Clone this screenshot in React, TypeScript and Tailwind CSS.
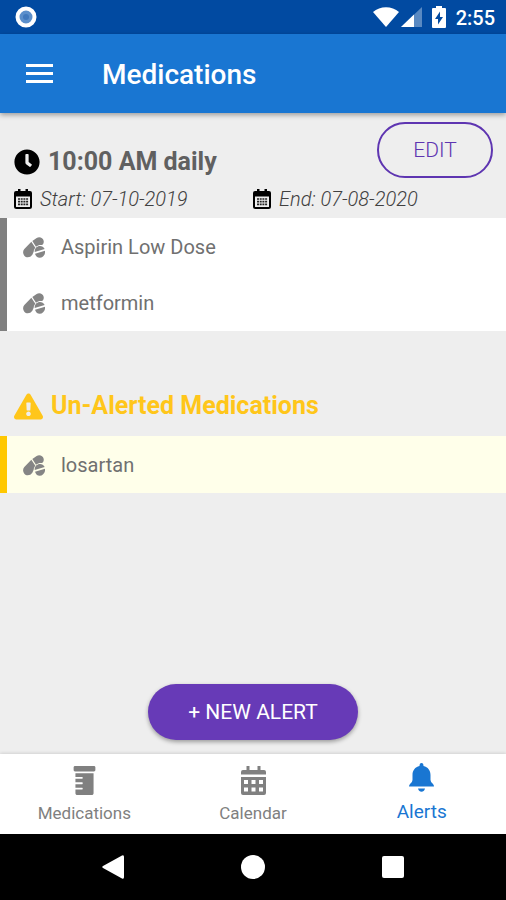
import type { ReactNode } from "react";
import { FaClock, FaExclamationTriangle, FaPrescriptionBottle } from "react-icons/fa";

function PillsIcon() {
  return (
    <svg viewBox="0 0 66 63" className="h-[21px] w-[22px] shrink-0 fill-[#858585]" aria-hidden="true">
      <path d="M28 12 L41 3 C49 -2 60 2 62 11 C63 17 61 21 57 24 C50 23 44 25 39 29 Z" />
      <path d="M25 14 L37 32 C34 36 32 40 32 44 L28 53 C22 62 10 63 4 56 C-1 50 -1 42 4 36 Z" />
      <path d="M35 45 C34 34 42 27 51 27 C57 27 62 30 65 36 Z" />
      <path d="M36 50 L66 41 C68 52 60 62 50 62 C43 62 38 57 36 50 Z" />
    </svg>
  );
}

function DateIcon() {
  return (
    <svg viewBox="0 0 18 20" className="h-5 w-[18px] shrink-0" aria-hidden="true">
      <path fill="#000" d="M4 0 H6.500 V2 H11.500 V0 H14 V2 H16 Q18 2 18 4 V7.500 H0 V4 Q0 2 2 2 H4 Z" />
      <rect x="1" y="5" width="16" height="14" rx="1.500" fill="none" stroke="#000" strokeWidth="2" />
      <path
        stroke="#222"
        strokeWidth="1.700"
        strokeDasharray="2 0.700"
        d="M4 10 H14.200 M4 12.700 H14.200 M4 15.400 H14.200"
      />
    </svg>
  );
}

function CalendarIcon() {
  return (
    <svg viewBox="0 0 25 29" className="h-[29px] w-[25px] fill-current" aria-hidden="true">
      <path d="M5.500 0 H8.500 V4 H16.500 V0 H19.500 V4 H23 Q25 4 25 6 V8.500 H0 V6 Q0 4 2 4 H5.500 Z" />
      <path
        fillRule="evenodd"
        d="M0 11 H25 V27 Q25 29 23 29 H2 Q0 29 0 27 Z M3 14 V18 H7 V14 Z M10.500 14 V18 H14.500 V14 Z M18 14 V18 H22 V14 Z M3 21.500 V25.500 H7 V21.500 Z M10.500 21.500 V25.500 H14.500 V21.500 Z M18 21.500 V25.500 H22 V21.500 Z"
      />
    </svg>
  );
}

function BellIcon() {
  return (
    <svg viewBox="0 0 25 29" className="h-[29px] w-[25px] fill-current" aria-hidden="true">
      <path d="M12.500 0 Q14.500 0 14.500 3 C19 4 21.500 7.500 21.500 12 V17 Q21.500 19 24 21 Q25 22 25 23.500 H0 Q0 22 1 21 Q3.500 19 3.500 17 V12 C3.500 7.500 6 4 10.500 3 Q10.500 0 12.500 0 Z" />
      <path d="M9 25.500 H16 C15.500 27.800 14 28.800 12.500 28.800 C11 28.800 9.500 27.800 9 25.500 Z" />
    </svg>
  );
}

function StatusBar() {
  return (
    <div className="flex h-[34px] items-center justify-between bg-[#014aa1] pr-[11px] pl-[15px] text-white">
      <svg viewBox="0 0 22 22" className="size-[22px]" aria-hidden="true">
        <circle cx="11" cy="11" r="8.5" fill="#5b8fcb" stroke="#fff" strokeWidth="4" />
        <circle cx="11" cy="11" r="3" fill="#4079bd" />
      </svg>
      <div className="flex items-center">
        <svg viewBox="0 0 26 20" className="h-5 w-[26px] fill-white" aria-hidden="true">
          <path d="M0 5 C7 -1.500 19 -1.500 26 5 L13 20 Z" />
        </svg>
        <svg viewBox="0 0 21 20" className="ml-[2px] h-5 w-[21px] fill-white" aria-hidden="true">
          <path d="M21 0 V20 H0 Z" opacity=".35" />
          <path d="M13 7.600 V20 H0 Z" />
        </svg>
        <svg viewBox="0 0 14 22" className="ml-[10px] h-[22px] w-[14px]" aria-hidden="true">
          <path fill="#fff" d="M4 0 H10 V2 H13 Q14 2 14 3 V21 Q14 22 13 22 H1 Q0 22 0 21 V3 Q0 2 1 2 H4 Z" />
          <path fill="#014aa1" d="M8 5.500 L3 13 H6 V18.500 L11 11 H8 Z" />
        </svg>
        <span className="ml-[10px] pt-px text-[20px] leading-6 font-medium">2:55</span>
      </div>
    </div>
  );
}

function AppBar() {
  return (
    <header className="z-10 flex h-[79px] items-center bg-[#1976d2] pl-[26px] text-white shadow-[0_2px_5px_rgba(0,0,0,0.35)]">
      <button type="button" aria-label="Open menu" className="flex h-[19px] w-[27px] flex-col justify-between">
        <span className="h-[3px] w-full bg-white" />
        <span className="h-[3px] w-full bg-white" />
        <span className="h-[3px] w-full bg-white" />
      </button>
      <h1 className="ml-[49px] pt-[2px] text-[28px] leading-8 font-medium">Medications</h1>
    </header>
  );
}

function DateLabel({ children }: { children: ReactNode }) {
  return (
    <p className="flex flex-1 items-center gap-2 text-[20px] leading-6 font-light text-[#404040] italic">
      <DateIcon />
      {children}
    </p>
  );
}

function MedicationRow({ name }: { name: string }) {
  return (
    <li className="flex h-14 items-center gap-4 pl-4 text-[20px] text-[#707070]">
      <PillsIcon />
      {name}
    </li>
  );
}

function Tab({ icon, label, active }: { icon: ReactNode; label: string; active?: boolean }) {
  return (
    <a
      href="#"
      aria-current={active ? "page" : undefined}
      className={
        active
          ? "flex flex-1 flex-col items-center gap-2 pt-[9px] text-[19px] leading-6 text-[#1976d2]"
          : "flex flex-1 flex-col items-center gap-[6px] pt-3 text-[17px] leading-6 text-[#808080]"
      }
    >
      {icon}
      {label}
    </a>
  );
}

export default function App() {
  return (
    <div className="flex min-h-screen flex-col bg-[#eeeeee] font-['Roboto',sans-serif]">
      <StatusBar />
      <AppBar />

      <main className="flex flex-1 flex-col">
        <section>
          <div className="flex items-start justify-between pt-[9px] pr-[13px] pl-[14px]">
            <h2 className="flex items-center gap-2 pt-6 text-[25px] leading-8 font-bold text-[#606060]">
              <FaClock className="size-[26px] text-black" aria-hidden="true" />
              10:00 AM daily
            </h2>
            <button
              type="button"
              className="h-14 w-[116px] rounded-full border-2 border-[#5e35b1] pt-[2px] text-[21px] font-light text-[#5e35b1]"
            >
              EDIT
            </button>
          </div>
          <div className="flex px-[14px] pt-[9px] pb-[7px]">
            <DateLabel>Start: 07-10-2019</DateLabel>
            <DateLabel>End: 07-08-2020</DateLabel>
          </div>
          <ul className="border-l-[7px] border-[#808080] bg-white pt-px">
            <MedicationRow name="Aspirin Low Dose" />
            <MedicationRow name="metformin" />
          </ul>
        </section>

        <section className="pt-[59px]">
          <h2 className="flex items-center gap-2 pb-[14px] pl-[14px] text-[25px] leading-8 font-bold text-[#ffc61a]">
            <FaExclamationTriangle className="size-[29px]" aria-hidden="true" />
            Un-Alerted Medications
          </h2>
          <ul className="border-l-[7px] border-[#ffc800] bg-[#ffffea] pt-px">
            <MedicationRow name="losartan" />
          </ul>
        </section>

        <div className="mt-auto flex justify-center pb-[14px]">
          <button
            type="button"
            className="h-14 rounded-full bg-[#673ab7] px-10 pt-[2px] text-[21px] text-white shadow-[0_2px_4px_rgba(0,0,0,0.35)]"
          >
            + NEW ALERT
          </button>
        </div>
      </main>

      <nav className="flex h-[80px] bg-white shadow-[0_-1px_3px_rgba(0,0,0,0.12)]">
        <Tab icon={<FaPrescriptionBottle className="size-[29px]" aria-hidden="true" />} label="Medications" />
        <Tab icon={<CalendarIcon />} label="Calendar" />
        <Tab icon={<BellIcon />} label="Alerts" active />
      </nav>

      <div className="flex h-[66px] items-center bg-black px-[43px]">
        <button type="button" aria-label="Back" className="flex flex-1 justify-center">
          <svg viewBox="0 0 22 24" className="h-6 w-[22px] fill-white" aria-hidden="true">
            <path d="M20 .5 Q22 -.5 22 2 V22 Q22 24.500 20 23.500 L1 13 Q-.5 12 1 11 Z" />
          </svg>
        </button>
        <button type="button" aria-label="Home" className="flex flex-1 justify-center">
          <span className="size-6 rounded-full bg-white" />
        </button>
        <button type="button" aria-label="Recent apps" className="flex flex-1 justify-center">
          <span className="size-[22px] rounded-xs bg-white" />
        </button>
      </div>
    </div>
  );
}
